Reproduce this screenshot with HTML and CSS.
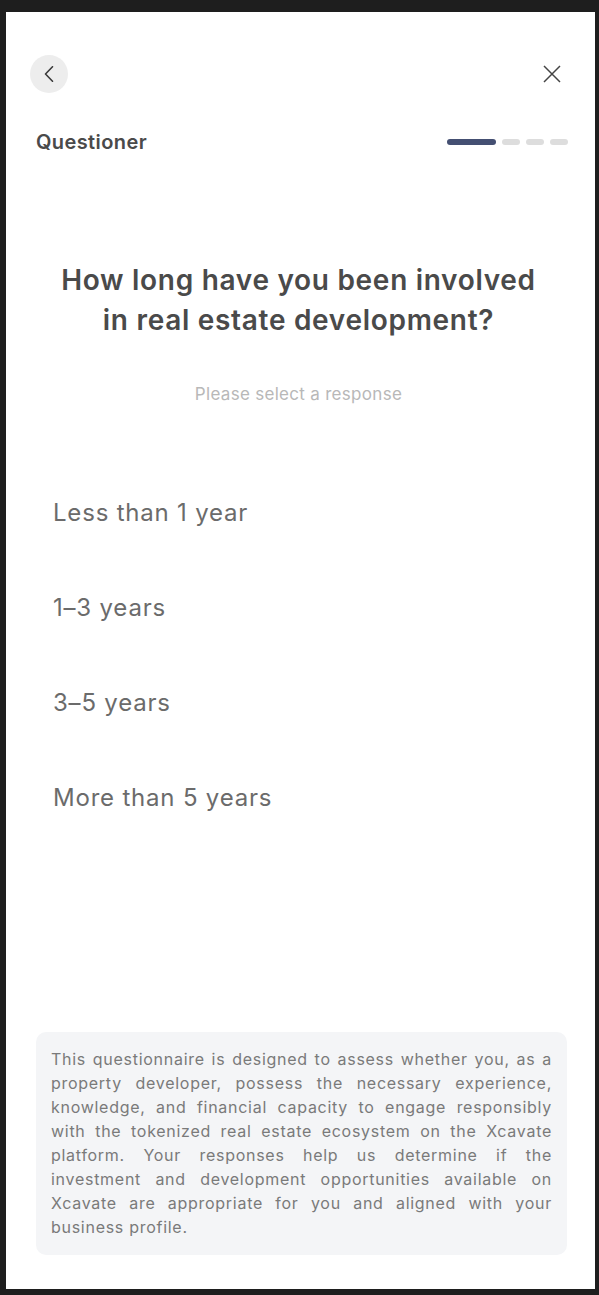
FILE: index.html
```html
<!DOCTYPE html>
<html lang="en">
<head>
<meta charset="utf-8">
<title>Questioner</title>
<link rel="stylesheet" href="styles.css">
</head>
<body>
<div class="card">
  <div class="topbar">
    <button class="back" aria-label="Back">
      <svg width="16" height="16" viewBox="0 0 16 16"><path d="M11.5 0.8 L4.5 8 L11.5 15.2" fill="none" stroke="#3a3a3a" stroke-width="1.6" stroke-linecap="round" stroke-linejoin="round"/></svg>
    </button>
    <button class="close" aria-label="Close">
      <svg width="18" height="18" viewBox="0 0 18 18"><path d="M1 1 L17 17 M17 1 L1 17" fill="none" stroke="#444" stroke-width="1.5"/></svg>
    </button>
  </div>
  <div class="titlebar">
    <span class="label">Questioner</span>
    <div class="progress">
      <span class="seg active"></span>
      <span class="seg"></span>
      <span class="seg"></span>
      <span class="seg"></span>
    </div>
  </div>
  <h1 class="question">How long have you been involved<br>in real estate development?</h1>
  <p class="hint">Please select a response</p>
  <ul class="options">
    <li>Less than 1 year</li>
    <li>1–3 years</li>
    <li>3–5 years</li>
    <li>More than 5 years</li>
  </ul>
  <div class="info">This questionnaire is designed to assess whether you, as a property developer, possess the necessary experience, knowledge, and financial capacity to engage responsibly with the tokenized real estate ecosystem on the Xcavate platform. Your responses help us determine if the investment and development opportunities available on Xcavate are appropriate for you and aligned with your business profile.</div>
</div>
</body>
</html>
```

FILE: styles.css
```css
* { box-sizing: border-box; }
html, body { margin: 0; padding: 0; }
body {
  background: #1e1e1e;
  font-family: Inter, "Open Sans", sans-serif;
  padding: 12px 4px 6px 6px;
  height: 1295px;
}
.card {
  background: #ffffff;
  width: 589px;
  height: 1277px;
  display: flex;
  flex-direction: column;
  padding: 0 28px 34px 24px;
}
.topbar {
  display: flex;
  justify-content: space-between;
  align-items: center;
  margin-top: 43px;
  height: 38px;
}
.back {
  width: 38px;
  height: 38px;
  border-radius: 50%;
  border: none;
  background: #ededed;
  display: flex;
  align-items: center;
  justify-content: center;
  padding: 0;
}
.close {
  border: none;
  background: none;
  padding: 0;
  width: 18px;
  height: 18px;
  margin-right: 6px;
  display: flex;
}
.titlebar {
  display: flex;
  justify-content: space-between;
  align-items: center;
  margin-top: 37px;
  padding-left: 6px;
}
.label {
  font-size: 20px;
  font-weight: 600;
  letter-spacing: 0.4px;
  color: #4a4a4a;
}
.progress {
  display: flex;
  gap: 6px;
  margin-right: -1px;
}
.seg {
  width: 18px;
  height: 6px;
  border-radius: 3px;
  background: #dddddd;
}
.seg.active {
  width: 49px;
  background: #444f72;
}
.question {
  margin: 106px 0 0;
  text-align: center;
  font-size: 28px;
  line-height: 40px;
  font-weight: 600;
  letter-spacing: 0.7px;
  color: #4a4a4a;
}
.hint {
  margin: 44px 0 0;
  text-align: center;
  font-size: 17px;
  letter-spacing: 0.3px;
  color: #b8b8b8;
}
.options {
  list-style: none;
  margin: 89px 0 0;
  padding: 0 0 0 23px;
}
.options li {
  font-size: 24px;
  line-height: 40px;
  letter-spacing: 0.8px;
  color: #6b6b6b;
  margin-bottom: 55px;
}
.info {
  margin-top: auto;
  margin-left: 6px;
  background: #f4f5f7;
  border-radius: 10px;
  padding: 15px 15px 16px;
  font-size: 16px;
  line-height: 24px;
  letter-spacing: 0.72px;
  color: #7a7a7a;
  text-align: justify;
}
```
